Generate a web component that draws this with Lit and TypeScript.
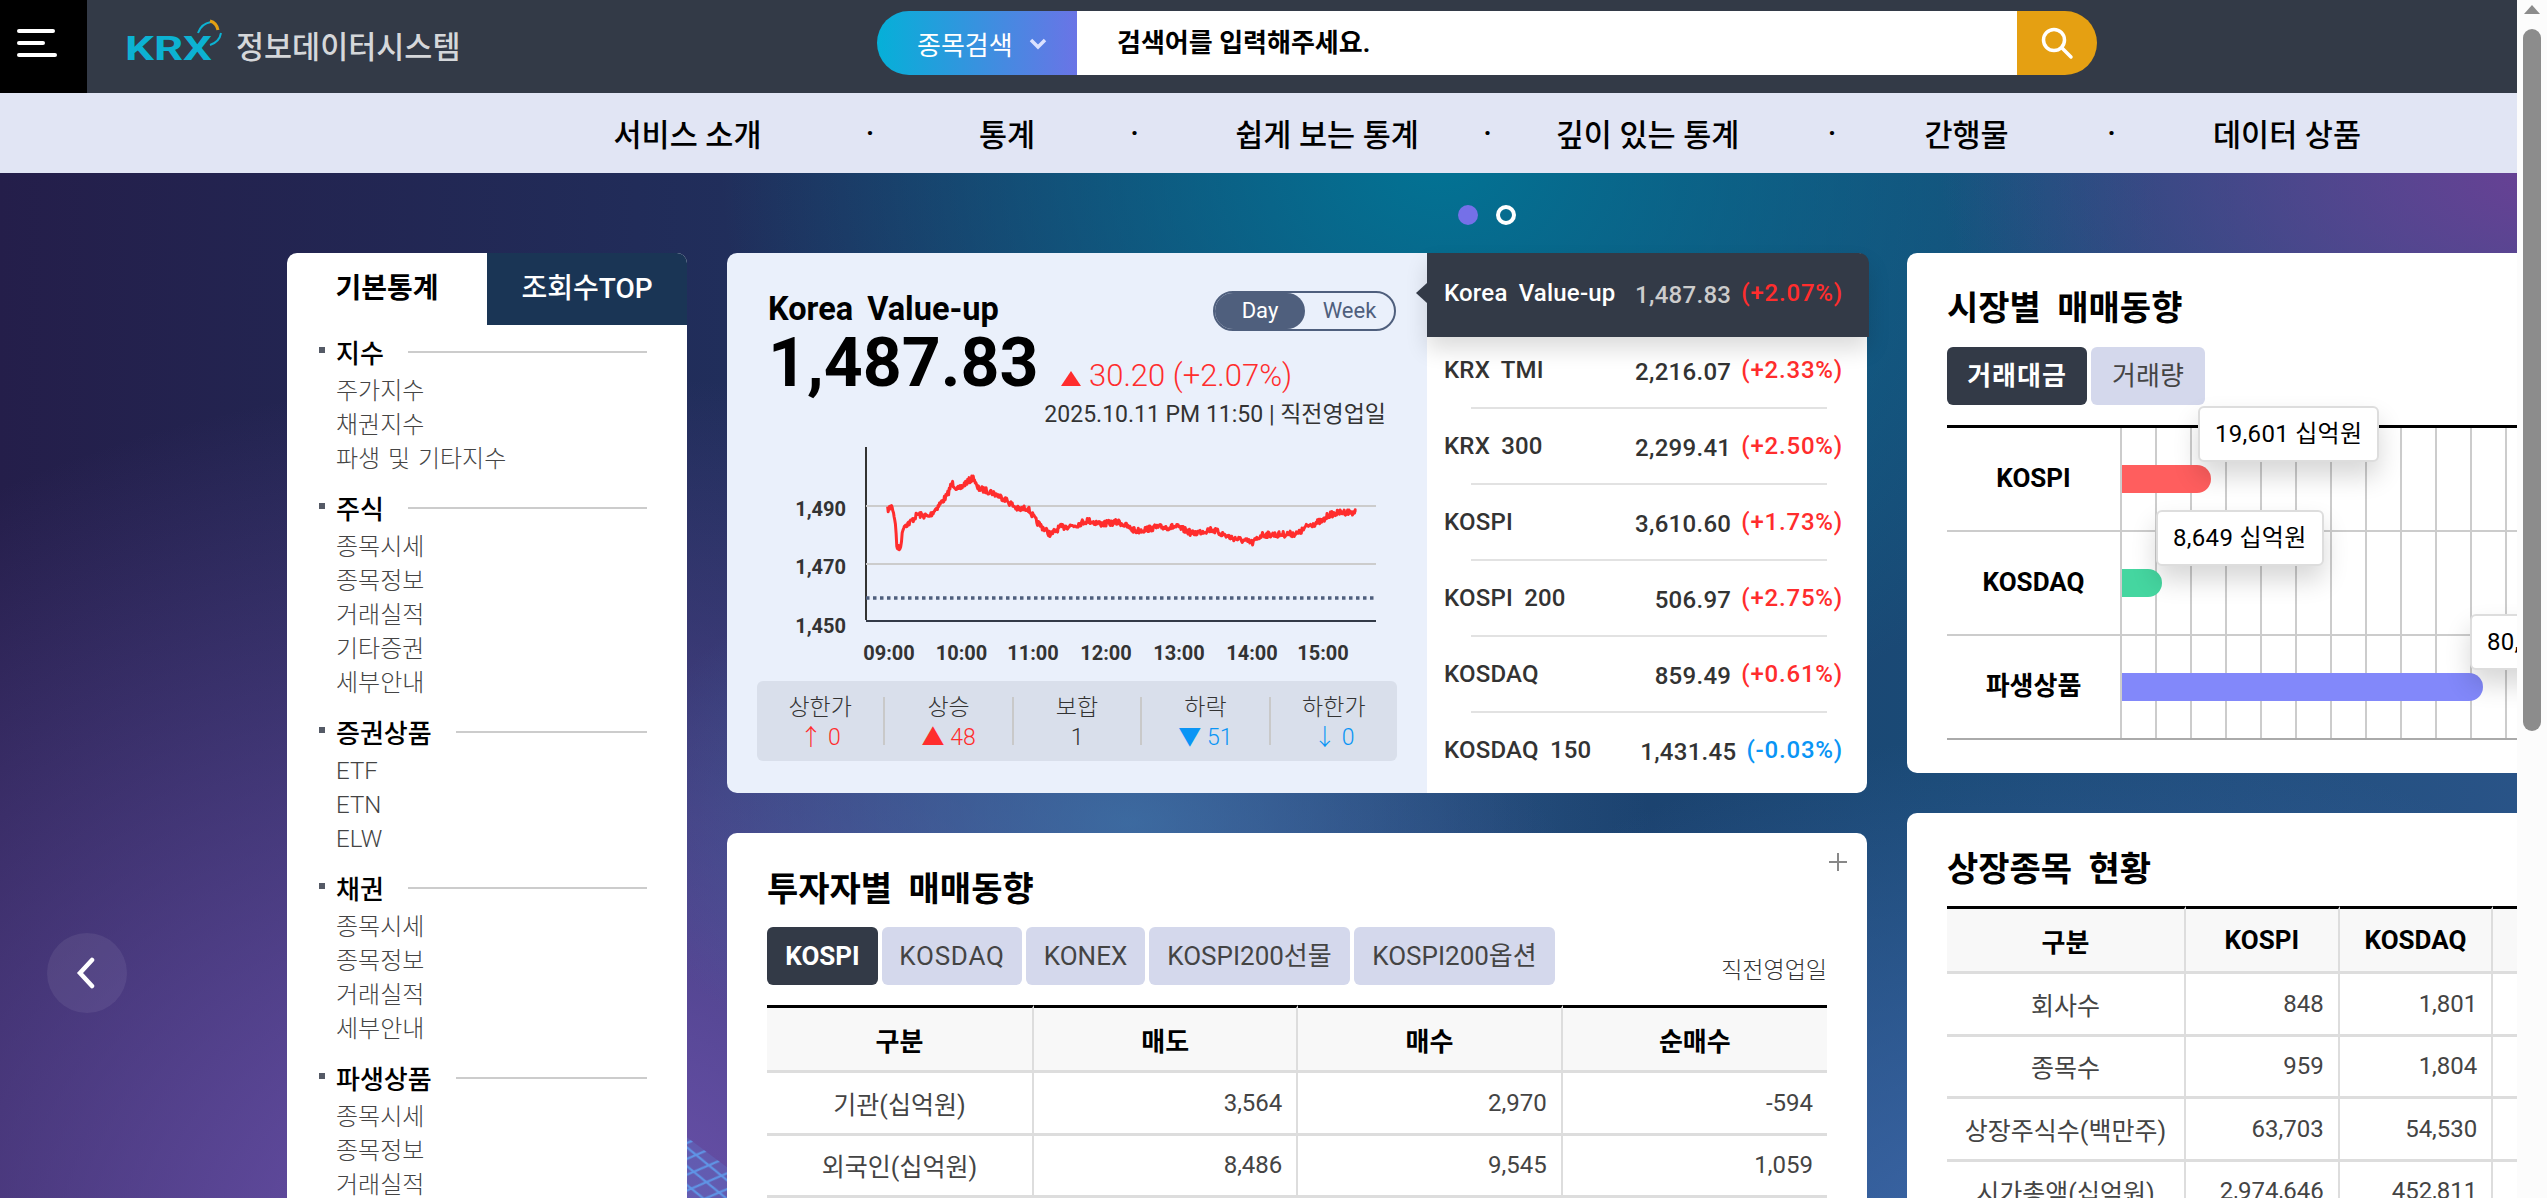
import { LitElement, html, css, svg } from "lit";
import { customElement } from "lit/decorators.js";

const NAV = ["서비스 소개", "통계", "쉽게 보는 통계", "깊이 있는 통계", "간행물", "데이터 상품"];

const SIDE = [
  { head: "지수", items: ["주가지수", "채권지수", "파생 및 기타지수"] },
  { head: "주식", items: ["종목시세", "종목정보", "거래실적", "기타증권", "세부안내"] },
  { head: "증권상품", items: ["ETF", "ETN", "ELW"] },
  { head: "채권", items: ["종목시세", "종목정보", "거래실적", "세부안내"] },
  { head: "파생상품", items: ["종목시세", "종목정보", "거래실적"] },
];

const INDEXES = [
  { name: "KRX TMI", value: "2,216.07", pct: "(+2.33%)", up: true },
  { name: "KRX 300", value: "2,299.41", pct: "(+2.50%)", up: true },
  { name: "KOSPI", value: "3,610.60", pct: "(+1.73%)", up: true },
  { name: "KOSPI 200", value: "506.97", pct: "(+2.75%)", up: true },
  { name: "KOSDAQ", value: "859.49", pct: "(+0.61%)", up: true },
  { name: "KOSDAQ 150", value: "1,431.45", pct: "(-0.03%)", up: false },
];

const MARKETS = [
  { name: "KOSPI", width: 89, color: "#ff5e5e", tip: "19,601 십억원", tipLeft: 78 },
  { name: "KOSDAQ", width: 40, color: "#45d6a0", tip: "8,649 십억원", tipLeft: 36 },
  { name: "파생상품", width: 361, color: "#8288fa", tip: "80,180 십억원", tipLeft: 350 },
];

const STATS = [
  { label: "상한가", value: "↑ 0", cls: "up" },
  { label: "상승", value: "▲ 48", cls: "up" },
  { label: "보합", value: "1", cls: "" },
  { label: "하락", value: "▼ 51", cls: "down" },
  { label: "하한가", value: "↓ 0", cls: "down" },
];

// rough trace of the intraday line, in page pixels relative to the chart box
const TRACE: [number, number][] = [
  [365, 755], [375, 745], [382, 790], [385, 860], [392, 865], [400, 800], [415, 790], [430, 768],
  [455, 775], [475, 745], [495, 715], [505, 680], [520, 700], [535, 680], [553, 665], [560, 695],
  [590, 705], [620, 725], [650, 755], [670, 750], [690, 790], [720, 825], [740, 805], [775, 798],
  [800, 785], [830, 795], [870, 790], [905, 815], [950, 805], [995, 803], [1030, 822], [1070, 810],
  [1110, 832], [1160, 848], [1180, 825], [1210, 825], [1260, 822], [1280, 800], [1315, 785],
  [1325, 770], [1355, 762], [1388, 762],
];

function linePoints() {
  let seed = 7;
  const rand = () => {
    seed = (seed * 16807) % 2147483647;
    return seed / 2147483647 - 0.5;
  };
  const pts: string[] = [];
  for (let i = 0; i < TRACE.length - 1; i++) {
    const [ax, ay] = TRACE[i];
    const [bx, by] = TRACE[i + 1];
    const x0 = 720 + ax / 2.178 - 727;
    const y0 = 240 + ay / 2.8 - 440;
    const x1 = 720 + bx / 2.178 - 727;
    const y1 = 240 + by / 2.8 - 440;
    const steps = Math.max(1, Math.round((x1 - x0) / 0.7));
    for (let s = 0; s < steps; s++) {
      const t = s / steps;
      pts.push(`${(x0 + (x1 - x0) * t).toFixed(1)},${(y0 + (y1 - y0) * t + rand() * 6).toFixed(1)}`);
    }
  }
  return pts.join(" ");
}

@customElement("app-root")
export class AppRoot extends LitElement {
  static styles = css`
    :host {
      display: block;
      position: relative;
      width: 2547px;
      height: 1198px;
      overflow: hidden;
      font-family: Roboto, "Noto Sans CJK KR", sans-serif;
      color: #000;
    }

    /* top bar */
    .top {
      display: flex;
      height: 93px;
      background: #333a47;
    }
    .burger {
      width: 87px;
      background: #000;
      padding: 29px 0 0 17px;
      box-sizing: border-box;
      display: flex;
      flex-direction: column;
      gap: 8px;
    }
    .burger i {
      display: block;
      height: 4px;
      background: #fff;
      border-radius: 2px;
    }
    .burger i:nth-child(1) {
      width: 38px;
    }
    .burger i:nth-child(2) {
      width: 28px;
    }
    .burger i:nth-child(3) {
      width: 40px;
    }
    .logo {
      width: 790px;
      box-sizing: border-box;
      padding-left: 40px;
      display: flex;
      align-items: center;
    }
    .logo svg {
      width: 96px;
      height: 60px;
      margin-top: -8px;
    }
    .logo span {
      margin-left: 13px;
      font-size: 30.5px;
      font-weight: 500;
      color: #d5d7da;
      margin-top: -3px;
    }
    .search {
      display: flex;
      width: 1220px;
      height: 64px;
      margin-top: 11px;
    }
    .sel {
      width: 200px;
      box-sizing: border-box;
      padding-left: 40px;
      border-radius: 32px 0 0 32px;
      background: linear-gradient(90deg, #05b0d8, #6a74e6);
      color: #fff;
      font-size: 26px;
      display: flex;
      align-items: center;
      gap: 15px;
    }
    .sel svg {
      width: 20px;
      height: 12px;
      margin-top: 2px;
    }
    .field {
      flex: 1;
      background: #fff;
      padding-left: 40px;
      font-size: 26px;
      font-weight: 700;
      line-height: 64px;
    }
    .go {
      width: 80px;
      background: #e5a012;
      border-radius: 0 32px 32px 0;
      display: flex;
      align-items: center;
      justify-content: center;
    }
    .go svg {
      width: 36px;
      height: 36px;
    }

    /* menu bar */
    .nav {
      height: 80px;
      background: #e1e5f4;
      padding-left: 614px;
      display: grid;
      grid-template-columns: 147px 218px 56px 199px 186px 135px 185px 184px 85px 205px 146px;
      align-items: center;
      justify-items: center;
      font-size: 30.5px;
      font-weight: 500;
      white-space: nowrap;
    }

    /* stage */
    .stage {
      position: relative;
      height: 1025px;
      overflow: hidden;
      background:
        radial-gradient(ellipse 620px 330px at 2560px 0, #6a4095 0%, rgba(106, 64, 149, 0) 100%),
        radial-gradient(ellipse 720px 640px at 1440px -20px, #027394 0%, rgba(2, 115, 148, 0) 100%),
        radial-gradient(ellipse 520px 300px at 1130px 650px, rgba(62, 120, 172, 0.75) 0%, rgba(62, 120, 172, 0) 100%),
        radial-gradient(ellipse 1150px 900px at 560px 1100px, #7154b2 0%, rgba(113, 84, 178, 0) 100%),
        radial-gradient(ellipse 800px 560px at 2050px 1120px, #4169ad 0%, rgba(65, 105, 173, 0) 100%),
        linear-gradient(90deg, #241e4a 0%, #1e3a68 50%, #1a4a76 76%, #2a5488 100%);
    }
    .mesh {
      position: absolute;
      left: 0;
      top: 0;
    }
    .dots {
      position: relative;
      display: flex;
      gap: 18px;
      padding: 32px 0 28px 1458px;
    }
    .dots i {
      width: 20px;
      height: 20px;
      box-sizing: border-box;
      border-radius: 50%;
      background: #7570e8;
    }
    .dots i + i {
      background: transparent;
      border: 4px solid #fff;
    }
    .prev {
      position: absolute;
      left: 47px;
      top: 760px;
      width: 80px;
      height: 80px;
      border-radius: 50%;
      background: rgba(255, 255, 255, 0.07);
      display: flex;
      align-items: center;
      justify-content: center;
    }
    .prev svg {
      width: 20px;
      height: 32px;
      margin-left: -2px;
    }
    .cols {
      position: relative;
      display: flex;
      align-items: flex-start;
      gap: 40px;
      padding-left: 287px;
    }
    .col {
      flex: none;
      display: flex;
      flex-direction: column;
      gap: 40px;
    }

    /* sidebar */
    .side {
      flex: none;
      width: 400px;
      height: 1000px;
      background: #fff;
      border-radius: 10px 10px 0 0;
    }
    .side-tabs {
      display: flex;
      height: 72px;
      font-size: 28px;
      line-height: 72px;
      text-align: center;
    }
    .side-tabs div {
      flex: 1;
      font-weight: 700;
    }
    .side-tabs div + div {
      background: #1a3555;
      color: #fff;
      font-weight: 500;
      border-radius: 0 10px 0 0;
    }
    .side-body {
      padding: 5px 40px 0 49px;
    }
    .group {
      margin-bottom: 10px;
    }
    .group h4 {
      position: relative;
      margin: 0;
      height: 44px;
      box-sizing: border-box;
      padding-bottom: 2px;
      display: flex;
      align-items: center;
      gap: 24px;
      font-size: 26px;
      font-weight: 500;
    }
    .group h4::before {
      content: "";
      position: absolute;
      left: -17px;
      top: 17px;
      width: 6px;
      height: 6px;
      background: #555a66;
    }
    .group h4::after {
      content: "";
      flex: 1;
      height: 2px;
      margin-top: 2px;
      background: #ccc;
    }
    .group div {
      font-size: 24px;
      line-height: 34px;
      font-weight: 300;
      word-spacing: 2px;
      color: #444;
    }

    /* index card */
    .index {
      width: 1140px;
      height: 540px;
      display: flex;
      border-radius: 10px;
    }
    .chart-side {
      width: 700px;
      box-sizing: border-box;
      padding-top: 38px;
      background: #eaf0fb;
      border-radius: 10px 0 0 10px;
    }
    .title-row {
      display: flex;
      justify-content: space-between;
      height: 40px;
      padding: 0 31px 0 41px;
    }
    .title-row h2 {
      margin: 0;
      font-size: 32.5px;
      font-weight: 700;
      line-height: 36px;
      word-spacing: 6px;
    }
    .toggle {
      display: flex;
      width: 183px;
      box-sizing: border-box;
      border: 2px solid #4f5f7d;
      border-radius: 20px;
      font-size: 22px;
      line-height: 35px;
      color: #4f5f7d;
      text-align: center;
    }
    .toggle span {
      flex: 1;
    }
    .toggle span:first-child {
      flex: none;
      width: 90px;
      background: #4f5f7d;
      color: #fff;
      border-radius: 18px;
    }
    .price-row {
      display: flex;
      align-items: baseline;
      margin-top: -4px;
      padding-left: 41px;
      height: 72px;
    }
    .price {
      font-size: 68px;
      font-weight: 700;
      line-height: 72px;
      width: 293px;
    }
    .change {
      font-size: 31px;
      font-weight: 300;
      color: #ff2d2d;
      display: flex;
      align-items: baseline;
      gap: 8px;
    }
    .change svg {
      width: 20px;
      height: 15px;
    }
    .when {
      text-align: right;
      padding-right: 41px;
      font-size: 23px;
      line-height: 32px;
      color: #333;
    }
    .chart {
      display: block;
      width: 700px;
      height: 230px;
      margin-top: 9px;
    }
    .chart text {
      font-size: 20px;
      font-weight: 700;
      fill: #333;
    }
    .stats {
      display: flex;
      width: 640px;
      height: 80px;
      margin: 11px 0 0 30px;
      background: #d9dfeb;
      border-radius: 6px;
      align-items: center;
    }
    .stats > div {
      flex: 1;
      height: 48px;
      text-align: center;
      border-left: 2px solid #c9c9c9;
      font-size: 23px;
      font-weight: 300;
      color: #333;
    }
    .stats > div:first-child {
      border-left: none;
    }
    .stats b {
      display: block;
      margin-top: -4px;
      line-height: 30px;
      font-weight: 300;
    }
    .stats em {
      display: block;
      font-style: normal;
      line-height: 30px;
    }
    .up {
      color: #ff2d2d;
    }
    .down {
      color: #0a95f5;
    }

    .list-side {
      width: 440px;
      background: #fff;
      border-radius: 0 10px 10px 0;
      position: relative;
    }
    .active {
      position: relative;
      z-index: 1;
      height: 84px;
      margin-right: -2px;
      box-sizing: border-box;
      padding: 0 26px 4px 17px;
      display: flex;
      align-items: center;
      background: #333a47;
      color: #fff;
      border-radius: 0 10px 0 0;
      box-shadow: 0 12px 22px rgba(0, 0, 0, 0.14);
      font-size: 24px;
      font-weight: 500;
    }
    .active::before {
      content: "";
      position: absolute;
      left: -11px;
      top: 30px;
      border: 10px solid transparent;
      border-left: none;
      border-right: 11px solid #333a47;
    }
    .active .val {
      color: #ccc;
    }
    .row {
      position: relative;
      height: 76px;
      box-sizing: border-box;
      padding: 0 24px 0 17px;
      display: flex;
      align-items: center;
      font-size: 24px;
      font-weight: 500;
      color: #333;
    }
    .row.first {
      margin-top: -5px;
    }
    .row::after {
      content: "";
      position: absolute;
      left: 44px;
      right: 40px;
      bottom: -1px;
      height: 2px;
      background: #e2e2e2;
    }
    .row:last-child::after {
      display: none;
    }
    .name {
      flex: 1;
      word-spacing: 5px;
      letter-spacing: 0.2px;
      white-space: nowrap;
    }
    .val {
      letter-spacing: 0.3px;
      padding-top: 4px;
    }
    .pct {
      margin-left: 10px;
      letter-spacing: 0.8px;
    }

    /* plain cards */
    .card {
      position: relative;
      background: #fff;
      border-radius: 10px;
      box-sizing: border-box;
      padding: 0 40px;
    }
    .card h3 {
      margin: 0;
      font-size: 34px;
      font-weight: 700;
      line-height: 50px;
      word-spacing: 8px;
    }
    .wide {
      width: 1140px;
      height: 600px;
      padding-top: 31px;
    }
    .plus {
      position: absolute;
      right: 20px;
      top: 20px;
      width: 18px;
      height: 18px;
    }
    .tab-row {
      display: flex;
      align-items: flex-end;
      margin-top: 13px;
      gap: 4px;
    }
    .tab {
      height: 58px;
      box-sizing: border-box;
      text-align: center;
      line-height: 58px;
      font-size: 26px;
      background: #d4d8ec;
      color: #444;
      border-radius: 6px;
      white-space: nowrap;
    }
    .tab.on {
      background: #333a47;
      color: #fff;
      font-weight: 700;
    }
    .wide .tab:nth-child(1) {
      width: 111px;
    }
    .wide .tab:nth-child(2) {
      width: 140px;
      letter-spacing: 0.8px;
    }
    .wide .tab:nth-child(3) {
      width: 119px;
    }
    .wide .tab:nth-child(4),
    .wide .tab:nth-child(5) {
      width: 201px;
    }
    .note {
      margin-left: auto;
      font-size: 23px;
      font-weight: 300;
      color: #333;
    }
    table {
      width: 100%;
      table-layout: fixed;
      border-collapse: separate;
      border-spacing: 0;
      font-size: 24px;
    }
    th {
      height: 68px;
      box-sizing: border-box;
      background: #f8f8f8;
      border-top: 3px solid #000;
      border-bottom: 3px solid #ddd;
      border-right: 2px solid #ddd;
      font-size: 26px;
      font-weight: 700;
      padding: 0;
    }
    td {
      height: 62.5px;
      box-sizing: border-box;
      border-bottom: 3px solid #ddd;
      border-right: 2px solid #ddd;
      color: #444;
      text-align: right;
      padding: 0 14px;
      font-weight: 400;
    }
    td:first-child {
      text-align: center;
      padding: 0;
      font-size: 25px;
    }
    tr > :last-child {
      border-right: none;
    }
    .wide table {
      margin-top: 20px;
    }

    .narrow {
      width: 780px;
      padding-top: 30px;
    }
    .market {
      height: 520px;
    }
    .listed {
      height: 500px;
      padding-top: 31px;
    }
    .market .tab {
      width: 114px;
    }
    .market .tab.on {
      width: 140px;
      letter-spacing: 1px;
    }
    .market .tab-row {
      margin-top: 14px;
    }
    .bars {
      margin-top: 20px;
      border-top: 3px solid #000;
    }
    .bar-row {
      position: relative;
      display: grid;
      grid-template-columns: 173px 1fr;
      height: 102px;
      border-bottom: 2px solid #ccc;
    }
    .bar-row:last-child {
      border-bottom-color: #aaa;
    }
    .bar-row label {
      font-size: 26px;
      font-weight: 700;
      text-align: center;
      line-height: 100px;
    }
    .bar-cell {
      position: relative;
      background: repeating-linear-gradient(90deg, #ccc 0 2px, transparent 2px 35px);
      display: flex;
      align-items: center;
      padding-left: 2px;
    }
    .bar {
      height: 28px;
      border-radius: 0 14px 14px 0;
    }
    .tip {
      position: absolute;
      z-index: 2;
      top: -22px;
      height: 56px;
      box-sizing: border-box;
      padding: 0 15px;
      line-height: 52px;
      font-size: 24px;
      letter-spacing: 0.3px;
      white-space: nowrap;
      background: #fff;
      border: 2px solid #ddd;
      border-radius: 6px;
      box-shadow: 0 14px 26px rgba(0, 0, 0, 0.16);
    }
    .listed table {
      margin-top: 12px;
    }

    .scroll {
      position: absolute;
      z-index: 5;
      right: 0;
      top: 0;
      bottom: 0;
      width: 30px;
      background: #fcfcfc;
    }
    .scroll::before {
      content: "";
      position: absolute;
      left: 7px;
      top: 5px;
      border: 8px solid transparent;
      border-top: none;
      border-bottom: 9px solid #8c8c8c;
    }
    .scroll i {
      position: absolute;
      left: 6px;
      top: 29px;
      width: 18px;
      height: 702px;
      border-radius: 9px;
      background: #8c8c8c;
    }
  `;

  private renderNav() {
    const out: unknown[] = [];
    NAV.forEach((n, i) => {
      if (i > 0) out.push(html`<span>·</span>`);
      out.push(html`<span>${n}</span>`);
    });
    return out;
  }

  private renderChart() {
    const xs = ["09:00", "10:00", "11:00", "12:00", "13:00", "14:00", "15:00"];
    const xc = [162, 234.5, 306, 379, 452, 525, 596];
    return svg`
      <line x1="139" y1="7" x2="139" y2="180" stroke="#333" stroke-width="2" />
      <line x1="139" y1="181" x2="649" y2="181" stroke="#333a47" stroke-width="2" />
      <line x1="139" y1="66" x2="649" y2="66" stroke="#ccc" stroke-width="2" />
      <line x1="139" y1="124" x2="649" y2="124" stroke="#ccc" stroke-width="2" />
      <line x1="139" y1="158" x2="649" y2="158" stroke="#4f5f7d" stroke-width="3.5" stroke-dasharray="3.5 3.5" />
      <text x="119" y="76" text-anchor="end">1,490</text>
      <text x="119" y="134" text-anchor="end">1,470</text>
      <text x="119" y="193" text-anchor="end">1,450</text>
      ${xs.map((t, i) => svg`<text x=${xc[i]} y="220" text-anchor="middle">${t}</text>`)}
      <polyline points=${linePoints()} fill="none" stroke="#ff2d2d" stroke-width="3" stroke-linejoin="round" />
    `;
  }

  render() {
    return html`
      <header class="top">
        <div class="burger"><i></i><i></i><i></i></div>
        <div class="logo">
          <svg viewBox="0 0 96 60">
            <text x="-2" y="47" font-size="33" font-weight="700" fill="#0cb2d2" textLength="87" lengthAdjust="spacingAndGlyphs">KRX</text>
            <path d="M71 20c2-6 7-10 13-11" fill="none" stroke="#0cb2d2" stroke-width="2" />
            <path d="M83 8c4 1 7 4 8 9" fill="none" stroke="#e5a012" stroke-width="3" />
            <path d="M94 20c-1 6-5 10-11 12" fill="none" stroke="#0cb2d2" stroke-width="2" />
          </svg>
          <span>정보데이터시스템</span>
        </div>
        <div class="search">
          <div class="sel">
            종목검색
            <svg viewBox="0 0 20 12"><path d="M3 2l7 7 7-7" fill="none" stroke="#dbe2ff" stroke-width="3.5" /></svg>
          </div>
          <div class="field">검색어를 입력해주세요.</div>
          <div class="go">
            <svg viewBox="0 0 36 36" fill="none" stroke="#fff" stroke-width="3.5" stroke-linecap="round">
              <circle cx="15" cy="15" r="10.5" />
              <path d="M23 23l9 9" />
            </svg>
          </div>
        </div>
      </header>
      <nav class="nav">${this.renderNav()}</nav>

      <main class="stage">
        <svg class="mesh" width="2547" height="1025" viewBox="0 0 2547 1025">
          <defs>
            <pattern id="net" width="28" height="17" patternUnits="userSpaceOnUse" patternTransform="rotate(8)">
              <path d="M0 0L28 17M28 0L0 17" stroke="#5f95e6" stroke-width="2.2" fill="none" />
            </pattern>
          </defs>
          <polygon points="600,899 780,1034 600,1034" fill="#5f7fd0" opacity="0.3" />
          <polygon points="600,899 780,1034 600,1034" fill="url(#net)" />
        </svg>
        <div class="dots"><i></i><i></i></div>
        <div class="prev">
          <svg viewBox="0 0 20 32"><path d="M16 3L4 16l12 13" fill="none" stroke="#fff" stroke-width="4.5" stroke-linecap="round" /></svg>
        </div>

        <div class="cols">
          <aside class="side">
            <div class="side-tabs"><div>기본통계</div><div>조회수TOP</div></div>
            <div class="side-body">
              ${SIDE.map(
                (g) => html`
                  <section class="group">
                    <h4>${g.head}</h4>
                    ${g.items.map((it) => html`<div>${it}</div>`)}
                  </section>
                `,
              )}
            </div>
          </aside>

          <div class="col">
            <section class="index">
              <div class="chart-side">
                <div class="title-row">
                  <h2>Korea Value-up</h2>
                  <div class="toggle"><span>Day</span><span>Week</span></div>
                </div>
                <div class="price-row">
                  <div class="price">1,487.83</div>
                  <div class="change">
                    <svg viewBox="0 0 20 15"><path d="M10 0l10 15H0z" fill="#ff2d2d" /></svg>
                    <span>30.20 (+2.07%)</span>
                  </div>
                </div>
                <div class="when">2025.10.11 PM 11:50 | 직전영업일</div>
                <svg class="chart" viewBox="0 0 700 230">${this.renderChart()}</svg>
                <div class="stats">
                  ${STATS.map(
                    (s) => html`<div><b>${s.label}</b><em class=${s.cls}>${s.value}</em></div>`,
                  )}
                </div>
              </div>
              <div class="list-side">
                <div class="active">
                  <span class="name">Korea Value-up</span>
                  <span class="val">1,487.83</span>
                  <span class="pct up">(+2.07%)</span>
                </div>
                ${INDEXES.map(
                  (r, i) => html`
                    <div class="row ${i === 0 ? "first" : ""}">
                      <span class="name">${r.name}</span>
                      <span class="val">${r.value}</span>
                      <span class="pct ${r.up ? "up" : "down"}">${r.pct}</span>
                    </div>
                  `,
                )}
              </div>
            </section>

            <section class="card wide">
              <svg class="plus" viewBox="0 0 18 18"><path d="M9 0v18M0 9h18" stroke="#888" stroke-width="2" /></svg>
              <h3>투자자별 매매동향</h3>
              <div class="tab-row">
                <div class="tab on">KOSPI</div>
                <div class="tab">KOSDAQ</div>
                <div class="tab">KONEX</div>
                <div class="tab">KOSPI200선물</div>
                <div class="tab">KOSPI200옵션</div>
                <span class="note">직전영업일</span>
              </div>
              <table>
                <colgroup><col style="width:267px" /><col /><col /><col /></colgroup>
                <tr><th>구분</th><th>매도</th><th>매수</th><th>순매수</th></tr>
                <tr><td>기관(십억원)</td><td>3,564</td><td>2,970</td><td>-594</td></tr>
                <tr><td>외국인(십억원)</td><td>8,486</td><td>9,545</td><td>1,059</td></tr>
              </table>
            </section>
          </div>

          <div class="col">
            <section class="card narrow market">
              <h3>시장별 매매동향</h3>
              <div class="tab-row">
                <div class="tab on">거래대금</div>
                <div class="tab">거래량</div>
              </div>
              <div class="bars">
                ${MARKETS.map(
                  (m) => html`
                    <div class="bar-row">
                      <label>${m.name}</label>
                      <div class="bar-cell">
                        <div class="bar" style="width:${m.width}px;background:${m.color}"></div>
                        <div class="tip" style="left:${m.tipLeft}px">${m.tip}</div>
                      </div>
                    </div>
                  `,
                )}
              </div>
            </section>

            <section class="card narrow listed">
              <h3>상장종목 현황</h3>
              <table>
                <colgroup><col style="width:239px" /><col /><col /><col /></colgroup>
                <tr><th>구분</th><th>KOSPI</th><th>KOSDAQ</th><th>KONEX</th></tr>
                <tr><td>회사수</td><td>848</td><td>1,801</td><td></td></tr>
                <tr><td>종목수</td><td>959</td><td>1,804</td><td></td></tr>
                <tr><td>상장주식수(백만주)</td><td>63,703</td><td>54,530</td><td></td></tr>
                <tr><td>시가총액(십억원)</td><td>2,974,646</td><td>452,811</td><td></td></tr>
              </table>
            </section>
          </div>
        </div>
      </main>

      <div class="scroll"><i></i></div>
    `;
  }
}
